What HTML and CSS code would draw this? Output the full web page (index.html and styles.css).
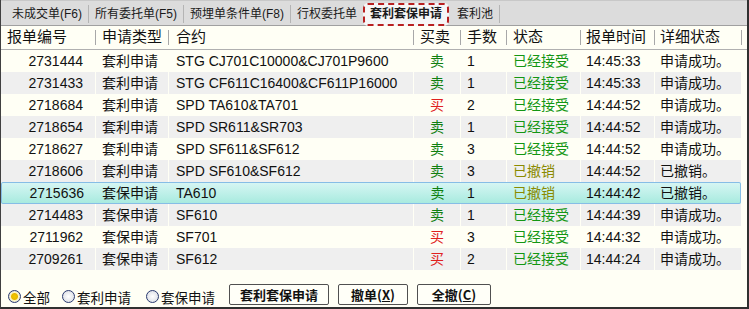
FILE: index.html
```html
<!DOCTYPE html>
<html lang="zh">
<head>
    <meta charset="UTF-8">
    <title>套利套保申请</title>
    <link rel="stylesheet" href="styles.css">
</head>
<body>
    <div class="ventana">
        <div class="pestanas">
            <span class="pestana">未成交单(F6)</span>
            <span class="pestana">所有委托单(F5)</span>
            <span class="pestana">预埋单条件单(F8)</span>
            <span class="pestana">行权委托单</span>
            <span class="pestana activa">套利套保申请</span>
            <span class="pestana">套利池</span>
        </div>

        <div class="tabla">
            <div class="fila cabecera">
                <div>报单编号</div><div>申请类型</div><div>合约</div><div>买卖</div>
                <div>手数</div><div>状态</div><div>报单时间</div><div>详细状态</div>
            </div>
            <div class="fila">
                <div class="num">2731444</div><div>套利申请</div><div>STG CJ701C10000&amp;CJ701P9600</div><div class="mm vende">卖</div>
                <div>1</div><div class="ok">已经接受</div><div>14:45:33</div><div>申请成功。</div>
            </div>
            <div class="fila par">
                <div class="num">2731433</div><div>套利申请</div><div>STG CF611C16400&amp;CF611P16000</div><div class="mm vende">卖</div>
                <div>1</div><div class="ok">已经接受</div><div>14:45:33</div><div>申请成功。</div>
            </div>
            <div class="fila">
                <div class="num">2718684</div><div>套利申请</div><div>SPD TA610&amp;TA701</div><div class="mm compra">买</div>
                <div>2</div><div class="ok">已经接受</div><div>14:44:52</div><div>申请成功。</div>
            </div>
            <div class="fila par">
                <div class="num">2718654</div><div>套利申请</div><div>SPD SR611&amp;SR703</div><div class="mm vende">卖</div>
                <div>1</div><div class="ok">已经接受</div><div>14:44:52</div><div>申请成功。</div>
            </div>
            <div class="fila">
                <div class="num">2718627</div><div>套利申请</div><div>SPD SF611&amp;SF612</div><div class="mm vende">卖</div>
                <div>3</div><div class="ok">已经接受</div><div>14:44:52</div><div>申请成功。</div>
            </div>
            <div class="fila par">
                <div class="num">2718606</div><div>套利申请</div><div>SPD SF610&amp;SF612</div><div class="mm vende">卖</div>
                <div>3</div><div class="anulado">已撤销</div><div>14:44:52</div><div>已撤销。</div>
            </div>
            <div class="fila sel">
                <div class="num">2715636</div><div>套保申请</div><div>TA610</div><div class="mm vende">卖</div>
                <div>1</div><div class="anulado">已撤销</div><div>14:44:42</div><div>已撤销。</div>
            </div>
            <div class="fila par">
                <div class="num">2714483</div><div>套保申请</div><div>SF610</div><div class="mm vende">卖</div>
                <div>1</div><div class="ok">已经接受</div><div>14:44:39</div><div>申请成功。</div>
            </div>
            <div class="fila">
                <div class="num">2711962</div><div>套保申请</div><div>SF701</div><div class="mm compra">买</div>
                <div>3</div><div class="ok">已经接受</div><div>14:44:32</div><div>申请成功。</div>
            </div>
            <div class="fila par">
                <div class="num">2709261</div><div>套保申请</div><div>SF612</div><div class="mm compra">买</div>
                <div>2</div><div class="ok">已经接受</div><div>14:44:24</div><div>申请成功。</div>
            </div>
        </div>

        <div class="pie">
            <label class="radio marcado"><span class="circulo"></span>全部</label>
            <label class="radio segundo"><span class="circulo"></span>套利申请</label>
            <label class="radio ultimo"><span class="circulo"></span>套保申请</label>
            <button class="boton ancho">套利套保申请</button>
            <button class="boton medio">撤单(<u>X</u>)</button>
            <button class="boton">全撤(<u>C</u>)</button>
        </div>
    </div>
</body>
</html>
```

FILE: styles.css
```css
body {
    margin: 0;
    background: #fffff5;
    font-family: "Liberation Sans", "Noto Sans CJK SC", sans-serif;
    color: #111;
}
.ventana {
    width: 746px;
    height: 307px;
    border-left: 1px solid #404040;
    border-right: 2px solid #303030;
    border-bottom: 2px solid #303030;
    background: #fffff5;
    display: flex;
    flex-direction: column;
    overflow: hidden;
}
.pestanas {
    flex: none;
    height: 26px;
    box-sizing: border-box;
    background: #dcdcdc;
    border-top: 1px solid #c8c8c8;
    border-bottom: 1px solid #a0a0a0;
    display: flex;
    align-items: flex-end;
    padding-left: 5px;
    font-size: 12px;
}
.pestana {
    height: 18px;
    line-height: 18px;
    padding: 0 6px;
    margin-bottom: 2px;
    border-right: 1px solid #b4b4b4;
    color: #1a1a1a;
}
.pestana.activa {
    border: 2px dashed #b82020;
    border-radius: 5px;
    background: #f6f6f6;
    font-weight: bold;
    height: 19px;
    line-height: 19px;
    padding: 0 5px;
    margin: 0 2px -1px -1px;
}
.tabla {
    flex: none;
    display: flex;
    flex-direction: column;
}
.fila {
    display: grid;
    grid-template-columns: 95px 73px 245px 47px 46px 74px 74px 87px;
    height: 22px;
    line-height: 22px;
    font-size: 14px;
    white-space: nowrap;
}
.fila > div {
    padding-left: 6px;
    border-right: 1px solid #fffff5;
    overflow: hidden;
}
.fila > div:nth-child(3) {
    padding-left: 7px;
}
.fila > div:nth-child(7),
.fila > div:nth-child(8) {
    padding-left: 5px;
}
.cabecera {
    height: 23px;
    line-height: 22px;
    font-size: 15px;
    border-bottom: 1px solid #b0b0b0;
}
.cabecera > div {
    background: linear-gradient(#a8a8a8, #a8a8a8) right center / 1px 15px no-repeat;
    border-right: none;
}
.par > div {
    background: #efefef;
}
.fila > div.num {
    text-align: right;
    padding-left: 0;
    padding-right: 12px;
}
.fila > div.mm {
    padding-left: 0;
    text-align: center;
}
.vende { color: #108010; }
.compra { color: #e02020; }
.ok { color: #139613; }
.anulado { color: #8a8a00; }
.sel {
    background: linear-gradient(#d8f6f4, #a6eade);
    box-shadow: inset 0 0 0 1px #86bde6;
    border-radius: 2px;
    width: 740px;
}
.sel > div {
    border-right: none;
}
.pie {
    flex: 1;
    display: flex;
    align-items: flex-end;
    padding: 0 0 2px 7px;
    font-size: 13.5px;
}
.radio {
    display: flex;
    align-items: center;
    height: 21px;
    margin-right: 12px;
    position: relative;
    top: 2px;
}
.radio.segundo {
    margin-right: 15px;
}
.radio.ultimo {
    margin-right: 14px;
}
.circulo {
    width: 11px;
    height: 11px;
    border: 1px solid #2a3a70;
    border-radius: 50%;
    background: radial-gradient(#ffffff, #d4d8e0);
    margin-right: 2px;
}
.marcado .circulo {
    background: radial-gradient(circle, #f0c800 0, #e8b800 3px, #fff6c0 4px, #d8dce4 6px);
}
.boton {
    width: 74px;
    height: 21px;
    padding: 0;
    margin-right: 9px;
    border: 1px solid #505050;
    border-radius: 2px;
    background: #fffff8;
    font-family: "Noto Sans CJK SC", sans-serif;
    font-weight: bold;
    font-size: 13px;
    line-height: 19px;
    color: #111;
}
.boton.ancho {
    width: 100px;
}
.boton.medio {
    width: 70px;
}
```
